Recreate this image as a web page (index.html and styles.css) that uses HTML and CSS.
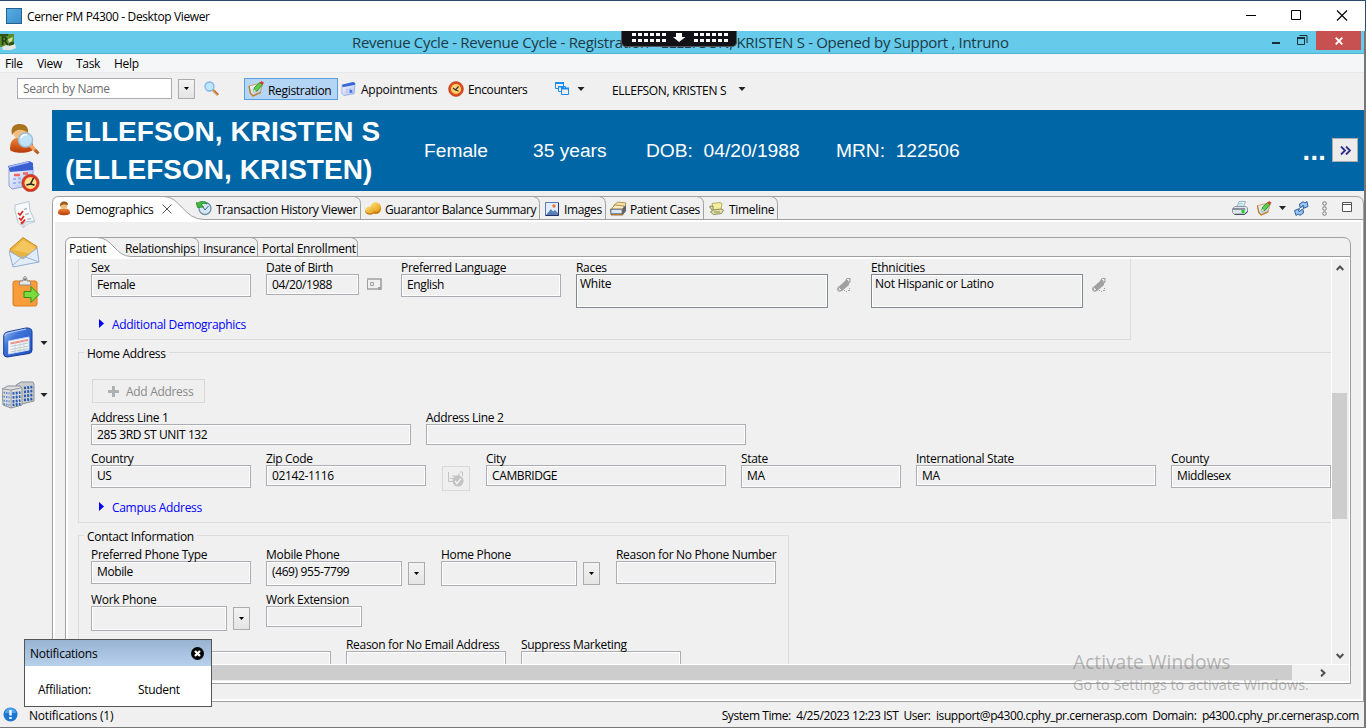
FILE: index.html
```html
<!DOCTYPE html>
<html lang="en">
<head>
<meta charset="utf-8">
<title>Cerner PM P4300 - Desktop Viewer</title>
<link rel="stylesheet" href="styles.css">
</head>
<body>
<svg class="defs" width="0" height="0">
  <defs>
    <linearGradient id="g-blue" x1="0" y1="0" x2="1" y2="1"><stop offset="0" stop-color="#a9c8fa"/><stop offset=".35" stop-color="#3f74d8"/><stop offset="1" stop-color="#1f4fc0"/></linearGradient>
    <linearGradient id="g-orange" x1="0" y1="0" x2="0" y2="1"><stop offset="0" stop-color="#f08a3c"/><stop offset="1" stop-color="#b63a08"/></linearGradient>
    <linearGradient id="g-gold" x1="0" y1="0" x2="1" y2="1"><stop offset="0" stop-color="#ffe27a"/><stop offset="1" stop-color="#e59a12"/></linearGradient>
    <linearGradient id="g-page" x1="0" y1="0" x2="1" y2="1"><stop offset="0" stop-color="#ffffff"/><stop offset="1" stop-color="#a9bcf0"/></linearGradient>
    <symbol id="i-note" viewBox="0 0 16 16"><path d="M1 5l10-2.500 3 1.500-1.500 7L5 14.500 2.500 12z" fill="url(#g-page)" stroke="#d0a05a"/><path d="M1 5l1.500 7.500L5 15l8-3.500" fill="none" stroke="#c07f28" stroke-width="1.300"/><path d="M5.500 11l1-4.500L12 1.500l2.500 2-5.500 6.500z" fill="#5fd048" stroke="#187a1a" stroke-width=".8"/><path d="M11.500 2L13.500 0 16 1.800l-1.500 2.200z" fill="#d8402e"/><path d="M5 11.500l1-3 2 2z" fill="#e8f4d0"/></symbol>
    <symbol id="i-cal" viewBox="0 0 16 16"><path d="M1 4l12-3 2 1-1 11-11 2-2-2z" fill="url(#g-page)" stroke="#8ea4e2" stroke-width=".8"/><path d="M1 3.500l12-3 2 1v2l-13 2.500z" fill="#3a68d4"/><path d="M5 8.500h2M8.500 8h2M5 11h2" stroke="#9db0e8"/><path d="M9 9h3v3H9z" fill="#4474e8"/></symbol>
    <symbol id="i-clock" viewBox="0 0 16 16"><circle cx="8" cy="8" r="6.300" fill="#ffd070" stroke="#dd4a1c" stroke-width="2.400"/><circle cx="8" cy="8" r="7.500" fill="none" stroke="#a5441f" stroke-width=".5"/><path d="M7.500 9l3-3.500M7.500 9L5 7M7.500 9l3 1" stroke="#333" stroke-width="1.200" fill="none"/></symbol>
    <symbol id="i-person" viewBox="0 0 14 15"><path d="M1 12c0-4 2.500-4.500 6-4.500s6 .5 6 4.500c0 3-12 3-12 0z" fill="url(#g-orange)"/><circle cx="7" cy="4.500" r="3.500" fill="#f2bd80"/><path d="M3.200 5.500C2.500 2 4.500.5 7 .5S11.500 2 10.800 4C8 3.500 5 3 3.200 5.500z" fill="#9a5e1c"/></symbol>
    <symbol id="i-edit" viewBox="0 0 14 14"><path d="M9 1l1-1h3.500v4L12 5.500V7l-7 6-3 1-2-2 .5-3 2-1L8 3z" fill="#a0a0a0"/><path d="M10 1.500h2v1.500h-1M1.500 9.500l2.500 2.500M1.500 12h1.500" stroke="#f0f0f0" fill="none"/><path d="M7 12.500h1M9 13.500h1M12 10.500h1M11 12.500h2" stroke="#a0a0a0"/></symbol>
    <symbol id="i-caret" viewBox="0 0 7 4"><path d="M0 0h7L3.500 4z"/></symbol>
  </defs>
</svg>

<div class="screen">
  <header class="viewer-bar">
    <span class="viewer-logo"></span>
    <span class="viewer-title">Cerner PM P4300 - Desktop Viewer</span>
    <svg class="viewer-controls" width="110" height="12" viewBox="0 0 110 12"><path d="M0 5.500h10" stroke="#000"/><path d="M45.500 .5h9v9h-9z" fill="none" stroke="#000"/><path d="M91 .5l10 10M101 .5l-10 10" stroke="#000" stroke-width="1.100"/></svg>
  </header>

  <div class="app">
    <div class="app-bar">
      <svg class="app-logo" width="16" height="17" viewBox="0 0 16 17"><path d="M0 1h14v10l-4 3H0z" fill="#5b8c2c"/><path d="M0 1h8v2H0zM9 9h5v3H9z" fill="#2f5218"/><path d="M2.500 12V4H5l1.500 2L5 8l3 4M2 8h3" stroke="#233f14" fill="none" stroke-width="1.700"/><path d="M8 6l5-2-1 4-3 2z" fill="#cfe29b"/><path d="M2 14l4-2 4 1 5-2 1 4-5 2H3z" fill="#e4e6e2"/></svg>
      <h1 class="app-title">Revenue Cycle - Revenue Cycle - Registration - ELLEFSON, KRISTEN S - Opened by Support , Intruno</h1>
      <div class="app-controls">
        <svg class="minimize" width="8" height="10" viewBox="0 0 8 10"><path d="M0 7h8v2H0z" fill="#1b2d35"/></svg>
        <svg class="restore" width="11" height="11" viewBox="0 0 11 11"><path d="M2.500.5h7.500v7.500M.5 2.500h7v7H.5z" fill="none" stroke="#1b2d35"/><path d="M0 2h8v2H0z" fill="#1b2d35"/></svg>
        <button class="app-close"><svg width="8" height="8" viewBox="0 0 8 8"><path d="M.7.7l6.600 6.600M7.300.7L.7 7.300" stroke="#fff" stroke-width="1.900"/></svg></button>
      </div>
      <div class="grip">
        <svg width="116" height="16" viewBox="0 0 116 16"><path d="M11 3.500h34M11 9.500h34M73 3.500h34M73 9.500h34" stroke="#fff" stroke-width="3" stroke-dasharray="4 2"/><path d="M55 2h6v4h3.500L58 11l-6-5h3z" fill="#fff"/></svg>
      </div>
    </div>

    <nav class="menu">
      <span class="menu-file">File</span><span class="menu-view">View</span><span class="menu-task">Task</span><span>Help</span>
    </nav>

    <div class="toolbar">
      <div class="search">Search by Name</div>
      <button class="drop drop-search"><svg width="5" height="3"><use href="#i-caret"/></svg></button>
      <svg class="glass" width="15" height="15" viewBox="0 0 15 15"><path d="M8.500 8.500L14 14" stroke="#d9954e" stroke-width="2.600"/><path d="M10.500 9.500l4 4" stroke="#8a5a34" stroke-width=".8"/><circle cx="5.500" cy="5.500" r="4.500" fill="#bfe6fc" stroke="#7fb2e6" stroke-width="1.300"/></svg>
      <button class="tool tool-on"><svg width="16" height="16"><use href="#i-note"/></svg><span class="t-reg">Registration</span></button>
      <span class="tool"><svg width="15" height="16"><use href="#i-cal"/></svg><span class="t-app">Appointments</span></span>
      <span class="tool tool-enc"><svg width="16" height="16"><use href="#i-clock"/></svg><span class="t-enc">Encounters</span></span>
      <svg class="windows" width="15" height="14" viewBox="0 0 15 14"><g fill="#f0f0f0" stroke="#1a8cf0"><path d="M.5 1.500h8v5h-8z"/><path d="M3.500 4.500h7v5h-7z"/><path d="M6.500 6.500h7v6h-7z"/></g><path d="M0 0h9v2H0zM3 4h6v1.500H3zM6 5.500h8v2H6z" fill="#1a8cf0"/></svg>
      <svg class="caret" width="8" height="4"><use href="#i-caret"/></svg>
      <span class="patient-pick">ELLEFSON, KRISTEN S</span>
      <svg class="caret" width="8" height="4"><use href="#i-caret"/></svg>
    </div>

    <div class="main">
      <aside class="side">
        <svg class="s-person" width="31" height="32" viewBox="0 0 31 32"><path d="M1 26c0-9 4-12 12-12s12 4 11 12c-1 5-23 5-23 0z" fill="url(#g-orange)"/><circle cx="11" cy="9" r="7" fill="#f2bd80"/><path d="M3 12C1 3 6 1 11 1s9 3 8 9C14 6 7 5 3 12z" fill="#a8741e"/><path d="M21 22l7 7" stroke="#f0a060" stroke-width="3.500"/><path d="M26 27l3.500 3.500" stroke="#b0602c" stroke-width="3"/><circle cx="16.500" cy="17" r="7" fill="#bfe4fa" stroke="#9dbdd8" stroke-width="1.500"/><path d="M12 15c1-3 4-4 6-3" stroke="#fff" stroke-width="1.500" fill="none"/></svg>
        <svg class="s-cal" width="32" height="32" viewBox="0 0 32 32"><path d="M1 9L22 4l3 3v18l-21 4-3-3z" fill="url(#g-page)" stroke="#8f9fe6"/><path d="M0 6l21-5 4 2v7L2 12z" fill="#3a5fd0"/><path d="M1 7l20-5" stroke="#a5bdf5" stroke-width="1.500"/><path d="M6 15h6M15 13.500h5" stroke="#ee6a60" stroke-width="2.500"/><path d="M5 19h3M10 18.500h3M5 23h3M10 22.500h3" stroke="#9eb3ee" stroke-width="2"/><circle cx="22.500" cy="23" r="7.300" fill="#ffdf8d" stroke="#e0341c" stroke-width="2.500"/><circle cx="22.500" cy="23" r="8.700" fill="none" stroke="#8e2a18" stroke-width=".6"/><path d="M22.500 24l3-6M22.500 24l-4 1M22.500 24l4 1" stroke="#242424" stroke-width="1.600"/></svg>
        <svg class="s-list" width="22" height="28" viewBox="0 0 22 28"><path d="M1 4L15 .5l1 9 5 11-6 2-6 4-5-5-3-12z" fill="#f7fafc" stroke="#b6c8d2"/><path d="M9 26c1-2 1-4 1-5l10-1" fill="#dfe9ef" stroke="#b6c8d2"/><path d="M4 12l2 2 3-4M5 17l2 2 3-4M7 21l1 1.500 3-4" stroke="#e0261e" stroke-width="1.700" fill="none"/><path d="M10 8.500l3-1M11 13.500l4-1M13 18.500l4-1" stroke="#b3bdc5" stroke-width="1.500"/></svg>
        <svg class="s-mail" width="31" height="31" viewBox="0 0 31 31"><path d="M1 12L14 .5l14 9-1 11-24 4z" fill="#e9b343" stroke="#c98d22"/><path d="M4 13L14 3l12 7-2 7z" fill="#f3c75e"/><path d="M0 14l14 8 14-11 2 14-26 5z" fill="#e3ecf9" stroke="#94add0"/><path d="M3 29l11-10 16 6" fill="none" stroke="#9db3d3"/></svg>
        <svg class="s-clip" width="29" height="31" viewBox="0 0 29 31"><rect x="1" y="5" width="24" height="25" rx="2" fill="#f99d3a" stroke="#dd7a18"/><path d="M7 9l1-4h3c0-6 4-6 4 0h3l1 4z" fill="#e8e8e8" stroke="#8b8b8b"/><circle cx="13" cy="3.500" r="1.200" fill="#777"/><path d="M12 15.500h7v-5l8 8-8 8v-5h-7z" fill="#7bdc3d" stroke="#2f8e1c"/></svg>
        <div class="s-row s-window"><svg width="31" height="31" viewBox="0 0 31 31"><path d="M.7 8.500Q1 6 4 5L23 1q6-.5 6 4v18q0 3-3 3.500L4 30q-3 0-3.300-3z" fill="url(#g-blue)" stroke="#123b9b"/><path d="M2 8.500Q3 6 5 6l18-4" stroke="#b9d2fb" stroke-width="1.200" fill="none"/><path d="M5.500 14L26 10v13L5.500 27z" fill="#f4f7fc" stroke="#c3d3f2"/><path d="M7.500 16.500L25 13" stroke="#ef8d7f" stroke-width="2.200"/><path d="M7.500 19.500L25 16M7.500 22.500L25 19M7.500 25L25 21.500" stroke="#b7cdb6"/><path d="M12 15v10M17 14v10M21 13v11" stroke="#c4cdec"/></svg><svg class="caret" width="8" height="4"><use href="#i-caret"/></svg></div>
        <div class="s-row s-building"><svg width="33" height="28" viewBox="0 0 33 28"><path d="M14 4l5-3h12l1 2v17l-12 3z" fill="#c9cccf" stroke="#8d9297"/><path d="M0 8l6-3h12l2 2v17l-11 3-8-3z" fill="#dddfe1" stroke="#8d9297"/><path d="M0 8l9 1 10-2M9 9v18" stroke="#92979c" fill="none"/><path d="M10.500 12.500l8-1M10.500 16.500l8-1M10.500 20.500l8-1M10.500 24l8-1M22 7l9-1M22 11l9-1M22 15l9-1M22 19l9-1" stroke="#2458b0" stroke-width="2.600" stroke-dasharray="2 1.200"/><path d="M1.500 11.500l6 1M1.500 15.500l6 1M1.500 19.500l6 1M1.500 23l6 1" stroke="#5d88c6" stroke-width="2" stroke-dasharray="1.500 1"/></svg><svg class="caret" width="8" height="4"><use href="#i-caret"/></svg></div>
      </aside>

      <section class="work">
        <div class="banner">
          <div class="banner-name"><div>ELLEFSON, KRISTEN S</div><div>(ELLEFSON, KRISTEN)</div></div>
          <span class="b-sex">Female</span><span class="b-age">35 years</span><span class="b-dob">DOB:&nbsp; 04/20/1988</span><span class="b-mrn">MRN:&nbsp; 122506</span>
          <span class="b-more">...</span>
          <button class="b-expand"><svg width="11" height="9" viewBox="0 0 11 9"><path d="M1 .5l4 4-4 4M6 .5l4 4-4 4" stroke="#31318c" stroke-width="1.900" fill="none"/></svg></button>
        </div>

        <div class="frame">
          <div class="tabs">
            <svg class="tabs-art" width="1312" height="25" viewBox="0 0 1312 25" fill="none" stroke="#a0a0a0"><path d="M.5 25V6.500Q.5.500 7 .5H112C128 .5 132 23.500 152 23.500V25z" fill="#fff" stroke="none"/><path d="M.5 25V6.500Q.5.500 7 .5H1304Q1311.500.5 1311.500 8V25M112 .5C128 .5 132 23.500 152 23.500H1311"/><path d="M302 .5q6.500 1 6.500 7v16M481 .5q6.500 1 6.500 7v16M547 .5q6.500 1 6.500 7v16M645 .5q6.500 1 6.500 7v16M719 .5q6.500 1 6.500 7v16"/></svg>
            <div class="tab tab-demo"><svg width="14" height="15"><use href="#i-person"/></svg><span class="t-demo">Demographics</span><svg class="tab-x" width="10" height="10" viewBox="0 0 10 10"><path d="M.5.5l9 9M9.500.5l-9 9" stroke="#555"/></svg></div>
            <div class="tab tab-hist"><svg width="16" height="15" viewBox="0 0 16 15"><circle cx="9" cy="7.500" r="6" fill="#d5e6f2" stroke="#6f8fa3" stroke-width="1.300"/><path d="M7 6l2 3 3.500-4" stroke="#34658a" fill="none"/><path d="M0 1.500l2 .5c4-3 8-2 9 1-3-1-4-1-5.500.5L7.500 6l-6 .5z" fill="#42ba3c" stroke="#1d7a25" stroke-width=".7"/></svg><span>Transaction History Viewer</span></div>
            <div class="tab tab-guar"><svg width="17" height="13" viewBox="0 0 17 13"><ellipse cx="11" cy="6.500" rx="5" ry="5.500" fill="#c9820f"/><ellipse cx="10.500" cy="5" rx="5" ry="4.700" fill="url(#g-gold)"/><ellipse cx="5" cy="9.200" rx="4.800" ry="3.600" fill="#bf7708"/><ellipse cx="5" cy="8" rx="4.800" ry="3.600" fill="url(#g-gold)"/></svg><span>Guarantor Balance Summary</span></div>
            <div class="tab tab-img"><svg width="14" height="14" viewBox="0 0 14 14"><path d="M.5.5h13v13H.5z" fill="#e3edfc" stroke="#5f77b0"/><path d="M.5 13.500h13V1" stroke="#1f2f6c" fill="none"/><path d="M1 13l5-6 2 2.500 2-1.500 3 3v2z" fill="#5a7fb5"/><circle cx="9" cy="4" r="1.700" fill="#e8792e"/></svg><span>Images</span></div>
            <div class="tab tab-case"><svg width="17" height="15" viewBox="0 0 17 15"><path d="M4 4l4-3 8 1-2 7H3z" fill="#f7e2a5" stroke="#a68040" stroke-width=".8"/><path d="M2 7l3-3 9 1-1 6H2z" fill="#f9ecc2" stroke="#a68040" stroke-width=".8"/><path d="M12 8l4-4v6l-3.500 4.500z" fill="#5d6268"/><path d="M.5 8h12v6H1z" fill="#d8913a" stroke="#7d5a20" stroke-width=".8"/><path d="M1 8.500h11v4H1z" fill="#dfe7f2" stroke="#5d7fae" stroke-width=".8"/></svg><span>Patient Cases</span></div>
            <div class="tab tab-time"><svg width="15" height="13" viewBox="0 0 15 13"><path d="M3 1.500L11 .5l2 1-1 6-8 1z" fill="#f2eda0" stroke="#a5a050" stroke-width=".8"/><path d="M.5 4.500L4 4v4l8-1 2.500 1-2 3.500-8 1-3-2.500 2-1z" fill="#e3e3b0" stroke="#78763a" stroke-width=".8"/><path d="M5 10h6" stroke="#8b884c"/></svg><span>Timeline</span></div>
            <div class="tab-tools">
              <svg width="16" height="14" viewBox="0 0 16 14"><path d="M5 5.500L7 .5h6.500l-2 5z" fill="#eaf6fc" stroke="#7ba2b5" stroke-width=".8"/><path d="M7 2.500h4M6.500 4h4" stroke="#8ecad0" stroke-width=".8"/><path d="M.5 7.500L3 5.500h11l1.500 1.500v4L13 13.500H2.500L.5 11.500z" fill="#dfe5ee" stroke="#7c8794" stroke-width=".8"/><path d="M1 8h12M2.500 13.300h10l3-3" stroke="#333d50" fill="none"/><path d="M9.500 9h3v3h-3z" fill="#20d020"/></svg>
              <svg class="tt-note" width="16" height="15"><use href="#i-note"/></svg>
              <svg class="caret tt-caret" width="7" height="4"><use href="#i-caret"/></svg>
              <svg class="tt-sync" width="15" height="15" viewBox="0 0 15 15" fill="#9bc6f0" stroke="#1c4f9c" stroke-width=".9"><path d="M6 6.500L5.500 3 9 .7l2 1.200L13 .5l1 5-5 2 1-2.500-1.500-.5L8 6z"/><path d="M9 8.500l.5 3.500L6 14.300 4 13l-2 1.500-1.500-5 5-2L4.500 10l1.500.5L7 9z"/></svg>
              <svg class="tt-dots" width="5" height="15" viewBox="0 0 5 15" fill="none" stroke="#777"><circle cx="2.500" cy="2.500" r="1.800"/><circle cx="2.500" cy="7.500" r="1.800"/><circle cx="2.500" cy="12.500" r="1.800"/></svg>
              <svg class="tt-max" width="10" height="10" viewBox="0 0 10 10"><path d="M.5.5h9v9h-9zM.5 2.500h9" fill="#fff" stroke="#555"/></svg>
            </div>
          </div>

          <div class="frame-body">
            <div class="inner">
              <div class="subtabs">
                <svg class="subtabs-art" width="1286" height="22" viewBox="0 0 1286 22" fill="none" stroke="#a0a0a0"><path d="M.5 22V6.500Q.5.500 7 .5H32C48 .5 50 19.500 66 19.500V22z" fill="#fff" stroke="none"/><path d="M.5 22V6.500Q.5.500 7 .5H1278Q1285.500.5 1285.500 8V22M32 .5C48 .5 50 19.500 66 19.500H1285"/><path d="M127 .5q6.500 1 6.500 6v13M186 .5q6.500 1 6.500 6v13M286 .5q6.500 1 6.500 6v13"/></svg>
                <span class="st-a">Patient</span><span class="st-b">Relationships</span><span class="st-c">Insurance</span><span class="st-d">Portal Enrollment</span>
              </div>
              <div class="view">
                <div class="form">
                  <div class="group group-demo">
                    <div class="row">
                      <div class="field w160"><label>Sex</label><div class="box h23">Female</div></div>
                      <div class="field w93"><label>Date of Birth</label><div class="box">04/20/1988</div></div>
                      <div class="addon a27"><svg width="15" height="12" viewBox="0 0 15 12"><path d="M0 1h14v10H0" fill="none" stroke="#a0a0a0" stroke-width="1.600"/><path d="M.5 2v9M3.500 4.500h3v3h-3z" fill="none" stroke="#a0a0a0"/><path d="M11 9h3v3h-3z" fill="#a0a0a0"/></svg></div>
                      <div class="field w160"><label>Preferred Language</label><div class="box h23">English</div></div>
                      <div class="field w252"><label>Races</label><div class="box area">White</div></div>
                      <div class="addon a28"><svg width="14" height="14"><use href="#i-edit"/></svg></div>
                      <div class="field w212"><label>Ethnicities</label><div class="box area">Not Hispanic or Latino</div></div>
                      <div class="addon a28"><svg width="14" height="14"><use href="#i-edit"/></svg></div>
                    </div>
                    <a class="expand"><svg width="5" height="9" viewBox="0 0 5 9"><path d="M0 0l5 4.500L0 9z" fill="#00f"/></svg><span>Additional Demographics</span></a>
                  </div>

                  <div class="group group-home">
                    <span class="legend">Home Address</span>
                    <button class="add"><svg width="11" height="11" viewBox="0 0 11 11"><path d="M4 0h3v4h4v3H7v4H4V7H0V4h4z" fill="#b0b0b0"/></svg><span>Add Address</span></button>
                    <div class="row">
                      <div class="field w320"><label>Address Line 1</label><div class="box">285 3RD ST UNIT 132</div></div>
                      <div class="field w320"><label>Address Line 2</label><div class="box"></div></div>
                    </div>
                    <div class="row row-next">
                      <div class="field w160"><label>Country</label><div class="box h23">US</div></div>
                      <div class="field w160"><label>Zip Code</label><div class="box">02142-1116</div></div>
                      <div class="addon a45"><button class="verify"><svg width="16" height="16" viewBox="0 0 16 16"><path d="M.5 1v9.500H5M14.500 1v4M12 1h2M2 7.500h4M4 5h7V2" fill="none" stroke="#c3c3c3"/><circle cx="10" cy="10" r="5.500" fill="#c3c3c3"/><path d="M7 10l2 2.500 4-5" stroke="#f0f0f0" stroke-width="1.500" fill="none"/></svg></button></div>
                      <div class="field w240"><label>City</label><div class="box">CAMBRIDGE</div></div>
                      <div class="field w160"><label>State</label><div class="box h23">MA</div></div>
                      <div class="field w240"><label>International State</label><div class="box">MA</div></div>
                      <div class="field w160"><label>County</label><div class="box h23">Middlesex</div></div>
                    </div>
                    <a class="expand"><svg width="5" height="9" viewBox="0 0 5 9"><path d="M0 0l5 4.500L0 9z" fill="#00f"/></svg><span>Campus Address</span></a>
                  </div>

                  <div class="group group-contact">
                    <span class="legend">Contact Information</span>
                    <div class="row">
                      <div class="field w160"><label>Preferred Phone Type</label><div class="box h23">Mobile</div></div>
                      <div class="field w136"><label>Mobile Phone</label><div class="box h25">(469) 955-7799</div></div>
                      <div class="addon a24"><button class="drop"><svg width="5" height="3"><use href="#i-caret"/></svg></button></div>
                      <div class="field w136"><label>Home Phone</label><div class="box h25"></div></div>
                      <div class="addon a24"><button class="drop"><svg width="5" height="3"><use href="#i-caret"/></svg></button></div>
                      <div class="field w160"><label>Reason for No Phone Number</label><div class="box h23"></div></div>
                    </div>
                    <div class="row row-next">
                      <div class="field w136"><label>Work Phone</label><div class="box h25"></div></div>
                      <div class="addon a24"><button class="drop"><svg width="5" height="3"><use href="#i-caret"/></svg></button></div>
                      <div class="field w96"><label>Work Extension</label><div class="box"></div></div>
                    </div>
                    <div class="row row-next">
                      <div class="field w240"><label>&nbsp;</label><div class="box h23"></div></div>
                      <div class="field w160"><label>Reason for No Email Address</label><div class="box h23"></div></div>
                      <div class="field w160"><label>Suppress Marketing</label><div class="box h23"></div></div>
                    </div>
                  </div>
                </div>
                <div class="vscroll">
                  <svg width="8" height="6" viewBox="0 0 8 6"><path d="M.7 5L4 1.500 7.300 5" fill="none" stroke="#505050" stroke-width="2"/></svg>
                  <div class="vthumb"></div>
                  <svg width="8" height="6" viewBox="0 0 8 6"><path d="M.7 1L4 4.500 7.300 1" fill="none" stroke="#505050" stroke-width="2"/></svg>
                </div>
                <div class="hscroll"><div class="hthumb"></div><svg width="6" height="8" viewBox="0 0 6 8"><path d="M1 .7L4.500 4 1 7.300" fill="none" stroke="#505050" stroke-width="2"/></svg></div>
              </div>
            </div>
          </div>
        </div>
      </section>
    </div>

    <footer class="status">
      <svg width="15" height="15" viewBox="0 0 15 15"><circle cx="7.500" cy="7.500" r="7" fill="#1d76d2"/><path d="M2 6a5.500 5 0 0 1 11 0z" fill="#4fa2ec"/><path d="M7.500 3v5.500M7.500 10v2" stroke="#fff" stroke-width="2.400"/></svg>
      <span class="status-note">Notifications (1)</span>
      <span class="st-time">System Time:&nbsp; 4/25/2023 12:23 IST</span><span class="st-user">User:&nbsp; isupport@p4300.cphy_pr.cernerasp.com</span><span class="st-dom">Domain:&nbsp; p4300.cphy_pr.cernerasp.com</span>
    </footer>
  </div>

  <div class="toast">
    <div class="toast-head"><span>Notifications</span><svg width="13" height="13" viewBox="0 0 13 13"><circle cx="6.500" cy="6.500" r="6.500" fill="#000"/><path d="M4 4l5 5M9 4L4 9" stroke="#fff" stroke-width="2.300"/></svg></div>
    <div class="toast-body"><span>Affiliation:</span><span>Student</span></div>
  </div>
  <div class="watermark"><div class="wm-a">Activate Windows</div><div class="wm-b">Go to Settings to activate Windows.</div></div>
</div>
</body>
</html>
```
FILE: styles.css
```css
* { box-sizing: border-box; }
body { margin: 0; font: 12px/15px "Open Sans", "Noto Sans", sans-serif; letter-spacing: -.31px; color: #000; background: #f0f0f0; }
button { font: inherit; letter-spacing: inherit; margin: 0; padding: 0; border-radius: 0; }
svg { display: block; flex: none; }
span, label, a { white-space: nowrap; }
.defs { position: absolute; }
.screen { position: relative; width: 1366px; height: 728px; overflow: hidden; display: flex; flex-direction: column; }

.viewer-bar { height: 31px; border-top: 1px solid #2c4a6b; border-right: 1px solid #2c4a6b; background: #fff; display: flex; align-items: center; padding-left: 6px; flex: none; }
.viewer-logo { width: 16px; height: 16px; background: linear-gradient(135deg, #58aee6, #3d8ecb); border: 1px solid #25618f; margin: -1px 5px 0 0; }
.viewer-title { letter-spacing: -.37px; padding-top: 1px; }
.viewer-controls { margin-left: auto; margin-right: 9px; }

.app { width: 1366px; height: 697px; border-right: 2px solid #777; border-bottom: 1px solid #777; display: flex; flex-direction: column; background: #f0f0f0; }
.app-bar { position: relative; height: 23px; flex: none; background: #66caea; border-bottom: 1px solid #4fb2cf; display: flex; align-items: flex-start; }
.app-logo { margin-top: 2px; }
.app-title { margin: 0 0 0 336px; font-size: 15px; line-height: 22px; font-weight: 400; letter-spacing: -.31px; color: #1c3a46; white-space: nowrap; }
.app-controls { margin-left: auto; display: flex; align-items: flex-start; padding-right: 3px; }
.minimize { margin: 4px 17px 0 0; }
.restore { margin: 4px 8px 0 0; }
.app-close { width: 45px; height: 19px; border: 0; background: #c75050; display: flex; align-items: center; justify-content: center; }
.grip { position: absolute; left: 621px; top: 0; width: 116px; height: 16px; background: #111116; border: 1px solid #55585c; border-top: 0; border-radius: 0 0 5px 5px; }
.grip svg { margin-left: -1px; }

.menu { height: 19px; flex: none; background: #f5f6f8; border-bottom: 1px solid #e8e8e8; padding-left: 5px; display: flex; line-height: 20px; }
.menu-file { width: 32px; }
.menu-view { width: 39px; }
.menu-task { width: 38px; }

.toolbar { height: 37px; flex: none; display: flex; align-items: center; padding: 0 0 6px 17px; }
.search { width: 155px; height: 21px; border: 1px solid #abadb3; background: #fff; color: #6d6d6d; padding: 2px 5px; line-height: 16px; margin-right: 6px; }
.drop { width: 17px; height: 23px; border: 1px solid #acacac; background: linear-gradient(#f3f3f3, #e5e5e5); display: flex; align-items: center; justify-content: center; }
.drop-search { height: 20px; margin-right: 9px; }
.glass { margin-right: 25px; }
.tool { display: flex; align-items: center; gap: 5px; height: 22px; }
.tool span { padding-top: 1px; }
.tool-on { width: 94px; border: 1px solid #5a9fe0; background: #b5d5f5; padding-left: 3px; gap: 4px; margin-right: 3px; color: #000; }
.tool-on span { padding-top: 3px; }
.t-app { width: 77px; letter-spacing: -.26px; }
.tool-enc { margin-left: 10px; gap: 4px; }
.t-enc { width: 59px; letter-spacing: -.4px; }
.windows { margin: 0 7px 0 28px; }
.caret { fill: #222; }
.patient-pick { padding-top: 3px; margin: 0 9px 0 27px; width: 117px; letter-spacing: -.3px; }

.main { display: flex; height: 592px; flex: none; }
.side { width: 52px; display: flex; flex-direction: column; align-items: flex-start; }
.s-person { margin: 13px 0 0 9px; }
.s-cal { margin: 5px 0 0 8px; }
.s-list { margin: 9px 0 0 14px; }
.s-mail { margin: 8px 0 0 9px; }
.s-clip { margin: 8px 0 0 12px; }
.s-row { display: flex; align-items: center; width: 52px; }
.s-window { margin: 20px 0 0 3px; }
.s-window .caret { margin-left: 6px; }
.s-building { margin: 23px 0 0 2px; }
.s-building .caret { margin-left: 5px; }

.work { width: 1312px; display: flex; flex-direction: column; }
.banner { height: 81px; flex: none; background: #0066a5; color: #fff; display: flex; align-items: center; padding-left: 13px; font: 19.2px/24px "Liberation Sans", Arial, sans-serif; letter-spacing: 0; }
.banner-name { font-weight: 700; font-size: 28px; line-height: 38px; letter-spacing: .05px; width: 359px; white-space: nowrap; }
.b-sex { width: 109px; }
.b-age { width: 113px; }
.b-dob { width: 190px; }
.b-more { margin-left: auto; font-weight: 700; font-size: 27px; line-height: 24px; letter-spacing: .3px; margin-right: 6px; }
.b-expand { width: 26px; height: 24px; border: 1px solid #acacac; background: #ececec; display: flex; align-items: center; justify-content: center; margin: -1px 6px 0 0; }

.frame { margin-top: 5px; height: 506px; display: flex; flex-direction: column; border-bottom: 1px solid #a0a0a0; }
.tabs { position: relative; height: 24px; flex: none; display: flex; align-items: center; }
.tabs-art, .subtabs-art { position: absolute; left: 0; top: 0; }
.tab { position: relative; display: flex; align-items: center; gap: 5px; height: 24px; padding-top: 1px; }
.tab span { padding-top: 1px; }
.tab-demo { width: 144px; padding-left: 5px; }
.t-demo { width: 78px; }
.tab-x { margin-left: 3px; }
.tab-hist { width: 169px; gap: 4px; letter-spacing: -.33px; }
.tab-guar { width: 180px; gap: 3px; letter-spacing: -.44px; }
.tab-img { width: 65px; letter-spacing: -.4px; }
.tab-case { width: 99px; gap: 3px; letter-spacing: -.4px; }
.tab-tools { position: relative; margin-left: auto; display: flex; align-items: center; padding-right: 12px; }
.tt-note { margin-left: 8px; }
.tt-caret { margin-left: 7px; }
.tt-sync { margin-left: 8px; }
.tt-dots { margin-left: 13px; }
.tt-max { margin: -2px 0 0 15px; }
.frame-body { flex: 1; border: solid #a0a0a0; border-width: 0 1px; padding: 17px 12px; box-shadow: inset 2px 2px #fff, inset -2px -2px #fff; }

.inner { height: 447px; width: 1286px; border-bottom: 1px solid #a0a0a0; display: flex; flex-direction: column; }
.subtabs { position: relative; height: 20px; flex: none; line-height: 23px; display: flex; padding-left: 4px; letter-spacing: -.35px; }
.subtabs span { position: relative; }
.st-a { width: 56px; }
.st-b { width: 78px; }
.st-c { width: 59px; }
.st-d { letter-spacing: -.25px; }
.view { flex: 1; border: 1px solid #a0a0a0; border-width: 0 1px; box-shadow: inset 2px 2px #fff, inset -1px -2px #fff; padding: 2px 1px 2px 2px; display: grid; grid-template: 405px 17px / 1264px 17px; }
.form { overflow: hidden; padding-left: 10px; border-right: 1px solid #fff; }
.group { position: relative; border: 1px solid #dcdcdc; padding-left: 12px; }
.group-demo { width: 1053px; height: 81px; border-top: 0; padding-top: 0; }
.group-home { width: 1300px; height: 171px; margin-top: 12px; padding-top: 26px; }
.group-contact { width: 711px; height: 200px; margin-top: 12px; padding-top: 10px; }
.legend { position: absolute; left: 5px; top: -7px; padding: 0 3px; background: #f0f0f0; }
.row { display: flex; align-items: flex-start; }
.row-next { margin-top: 5px; }
.field { margin-right: 15px; flex: none; }
.field label { display: block; height: 15px; line-height: 17px; }
.addon { flex: none; padding-top: 19px; margin-left: -15px; margin-right: 15px; }
.box { height: 21px; border: 1px solid #abadb3; box-shadow: inset 0 0 0 1px #fff; background: #f0f0f0; padding: 1px 5px; line-height: 18px; white-space: nowrap; letter-spacing: -.38px; }
.h23 { height: 23px; }
.h25 { height: 25px; }
.area { height: 34px; border-color: #828790; padding: 0 3px; letter-spacing: -.27px; }
.w93 { width: 93px; } .w96 { width: 96px; } .w136 { width: 136px; } .w160 { width: 160px; }
.w212 { width: 212px; } .w240 { width: 240px; } .w252 { width: 252px; } .w320 { width: 320px; }
.a24 { width: 24px; padding: 16px 0 0 6px; }
.a27 { width: 27px; padding-left: 8px; }
.a28 { width: 28px; padding-left: 9px; }
.a45 { width: 45px; padding: 16px 0 0 16px; }
.expand { display: flex; align-items: center; gap: 8px; color: #00f; padding-left: 8px; height: 15px; }
.expand span { line-height: 17px; padding-top: 1px; }
.group-demo .expand { margin-top: 8px; }
.group-home .expand { margin-top: 8px; }
.add { width: 113px; height: 24px; margin: 0 0 6px 1px; border: 1px solid #d9d9d9; background: #efefef; color: #8a8a8a; display: flex; align-items: center; gap: 7px; padding-left: 15px; }
.verify { width: 28px; height: 25px; border: 1px solid #d9d9d9; background: #efefef; display: flex; align-items: center; justify-content: center; }

.vscroll { display: flex; flex-direction: column; align-items: center; padding: 6px 2px 5px 0; }
.vthumb { width: 15px; height: 126px; background: #cdcdcd; margin: 122px 0 auto; }
.hscroll { grid-column: 1 / 3; display: flex; align-items: flex-start; border-top: 1px solid #fff; }
.hthumb { width: 1207px; height: 15px; margin-left: 17px; background: #cdcdcd; }
.hscroll svg { margin: 4px 0 0 28px; }

.status { height: 25px; display: flex; align-items: center; padding-left: 3px; }
.status span { padding-top: 1px; }
.status-note { margin-left: 11px; letter-spacing: -.2px; }
.st-time { margin-left: auto; letter-spacing: -.42px; }
.st-user { margin-left: 5px; letter-spacing: -.42px; }
.st-dom { margin: 0 5px; letter-spacing: -.42px; }

.toast { position: absolute; left: 24px; top: 639px; width: 188px; height: 68px; border: 1px solid #555; background: #fff; }
.toast-head { height: 26px; background: linear-gradient(#98b2d3, #b7d0eb); display: flex; align-items: center; justify-content: space-between; padding: 0 7px 0 5px; letter-spacing: -.25px; }
.toast-head span { padding-top: 1px; }
.toast-body { display: flex; padding: 16px 13px; }
.toast-body span:first-child { width: 100px; }
.watermark { position: absolute; left: 1073px; top: 649px; color: rgba(120, 120, 120, .5); letter-spacing: 0; }
.wm-a { font-size: 19.200px; line-height: 26px; white-space: nowrap; }
.wm-b { font-size: 14.400px; line-height: 19px; white-space: nowrap; }
```
